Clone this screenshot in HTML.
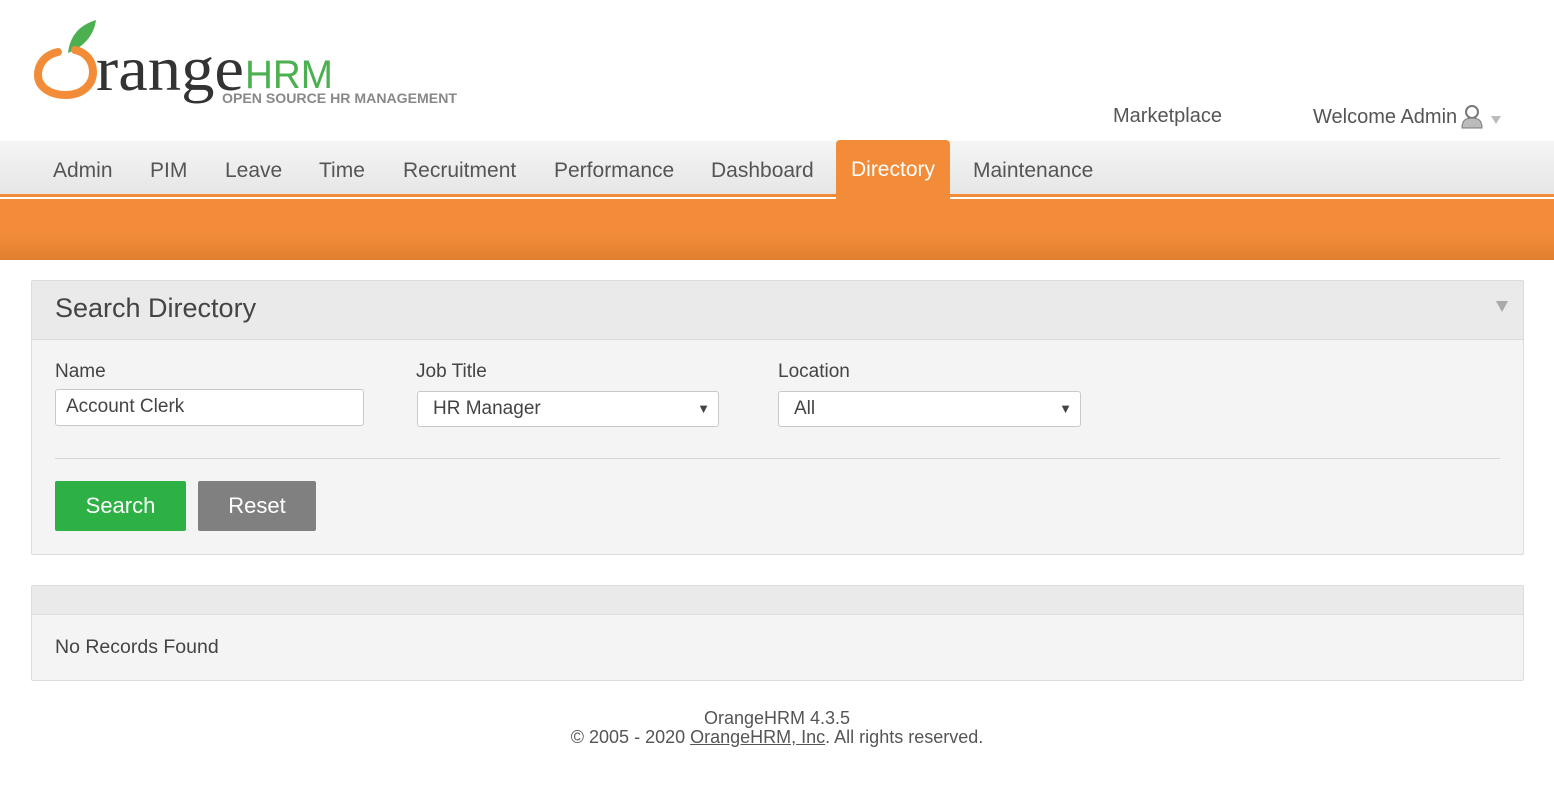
<!DOCTYPE html>
<html><head><style>
body{margin:0;width:1554px;height:809px;background:#fff;font-family:"Liberation Sans",sans-serif;position:relative;overflow:hidden;color:#444}
.a{position:absolute}
.nav{top:141px;left:0;width:1554px;height:53px;background:linear-gradient(#f5f5f5,#e6e6e6)}
.nav span{position:absolute;top:18px;font-size:21px;color:#555}
.ol{top:194px;left:0;width:1554px;height:3px;background:#f28c38}
.band{top:199px;left:0;width:1554px;height:61px;background:linear-gradient(#f28c38 60%,#e07f2e)}
.tab{top:140px;left:836px;width:114px;height:60px;background:#f28c38;border-radius:4px 4px 0 0;color:#fff;font-size:21px;text-align:center;line-height:60px}
.box{left:31px;width:1491px;border:1px solid #dcdcdc;background:#f4f4f4;border-radius:2px}
.lbl{font-size:19px;color:#444}
.inp{height:36px;border:1px solid #c9c9c9;border-radius:3px;background:#fff;box-sizing:border-box;font-size:19px;color:#444;padding-left:10px;line-height:34px}
.btn{height:50px;color:#fff;font-size:22px;text-align:center;line-height:50px;border-radius:2px}
</style></head><body>
<svg class="a" style="left:30px;top:15px" width="440" height="95" viewBox="0 0 440 95">
<path d="M38 38 C40 20 50 10 66 5 C64 20 54 32 38 38Z" fill="#4caf50"/>
<path d="M28 37 C14 40 8 50 8 60 C8 72 20 80 36 80 C52 80 63 70 63 57 C63 45 55 37 45 35" fill="none" stroke="#f28c38" stroke-width="8" stroke-linecap="round"/>
<text x="66" y="75" font-family="Liberation Serif,serif" font-size="64" fill="#333" textLength="148" lengthAdjust="spacingAndGlyphs">range</text>
<text x="215" y="73" font-family="Liberation Sans,sans-serif" font-size="40" fill="#4caf50" textLength="88" lengthAdjust="spacingAndGlyphs">HRM</text>
<text x="192" y="88" font-family="Liberation Sans,sans-serif" font-size="13.5" font-weight="bold" fill="#888" textLength="235" lengthAdjust="spacingAndGlyphs">OPEN SOURCE HR MANAGEMENT</text>
</svg>
<div class="a" style="left:1113px;top:105px;font-size:20px;color:#555">Marketplace</div>
<div class="a" style="left:1313px;top:106px;font-size:20px;color:#555">Welcome Admin</div>
<svg class="a" style="left:1460px;top:104px" width="46" height="26"><circle cx="12" cy="8" r="6" fill="none" stroke="#777" stroke-width="2"/><path d="M2 24 C2 16 6 14 12 14 C18 14 22 16 22 24Z" fill="#bbb" stroke="#777"/><path d="M31 12 L41 12 L36 20Z" fill="#bbb"/></svg>
<div class="a nav">
<span style="left:53px">Admin</span><span style="left:150px">PIM</span><span style="left:225px">Leave</span><span style="left:319px">Time</span><span style="left:403px">Recruitment</span><span style="left:554px">Performance</span><span style="left:711px">Dashboard</span><span style="left:973px">Maintenance</span>
</div>
<div class="a ol"></div>
<div class="a band"></div>
<div class="a tab">Directory</div>
<div class="a box" style="top:280px;height:273px">
<div class="a" style="left:0;top:0;width:1491px;height:58px;background:#eaeaea;border-bottom:1px solid #dcdcdc"></div>
<div class="a" style="left:23px;top:12px;font-size:27px;color:#444">Search Directory</div>
<div class="a" style="left:1464px;top:20px;width:0;height:0;border-left:6px solid transparent;border-right:6px solid transparent;border-top:11px solid #aaa"></div>
<div class="a lbl" style="left:23px;top:80px">Name</div>
<div class="a lbl" style="left:384px;top:80px">Job Title</div>
<div class="a lbl" style="left:746px;top:80px">Location</div>
<div class="a inp" style="left:23px;top:108px;width:309px;height:37px">Account Clerk</div>
<div class="a inp" style="left:385px;top:110px;width:302px;padding-left:15px">HR Manager<span style="position:absolute;right:8px;font-size:13px">▼</span></div>
<div class="a inp" style="left:746px;top:110px;width:303px;padding-left:15px">All<span style="position:absolute;right:8px;font-size:13px">▼</span></div>
<div class="a" style="left:23px;top:177px;width:1445px;height:1px;background:#d5d5d5"></div>
<div class="a btn" style="left:23px;top:200px;width:131px;background:#2db144">Search</div>
<div class="a btn" style="left:166px;top:200px;width:118px;background:#808080">Reset</div>
</div>
<div class="a box" style="top:585px;height:94px">
<div class="a" style="left:0;top:0;width:1491px;height:28px;background:#eaeaea;border-bottom:1px solid #dcdcdc"></div>
<div class="a" style="left:23px;top:50px;font-size:19.5px;color:#444">No Records Found</div>
</div>
<div class="a" style="left:0;top:709px;width:1554px;text-align:center;font-size:18px;color:#555;line-height:19px">OrangeHRM 4.3.5<br>© 2005 - 2020 <u>OrangeHRM, Inc</u>. All rights reserved.</div>
</body></html>
